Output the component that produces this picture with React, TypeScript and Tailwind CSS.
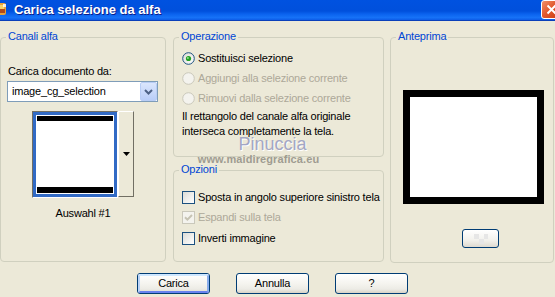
import React from "react";

const FONT = "font-['Liberation_Sans',Arial,sans-serif]";

function GroupBox({
  label,
  className,
  children,
}: {
  label: string;
  className: string;
  children?: React.ReactNode;
}) {
  return (
    <div className={"flex flex-col border border-[#d0d0bf] rounded-[4px] " + className}>
      <div className="-mt-[8px] ml-[5px] px-[2px] w-fit bg-[#ece9d8] text-[#0046d5] leading-[13px] tracking-[-0.2px]">
        {label}
      </div>
      {children}
    </div>
  );
}

function Radio({ checked, disabled }: { checked?: boolean; disabled?: boolean }) {
  return (
    <svg width="13" height="13" viewBox="0 0 13 13" className="shrink-0">
      <defs>
        <linearGradient id={disabled ? "rgd" : "rg"} x1="0" y1="0" x2="1" y2="1">
          <stop offset="0" stopColor={disabled ? "#f4f3ee" : "#dcdcd6"} />
          <stop offset="1" stopColor={disabled ? "#f4f3ee" : "#ffffff"} />
        </linearGradient>
      </defs>
      <circle
        cx="6.5"
        cy="6.5"
        r="5.8"
        fill={`url(#${disabled ? "rgd" : "rg"})`}
        stroke={disabled ? "#cac8bb" : "#1c5180"}
        strokeWidth="1"
      />
      {checked && <circle cx="6.5" cy="6.5" r="2.6" fill="#21a121" />}
      {checked && <circle cx="5.9" cy="5.9" r="1" fill="#8ee08e" />}
    </svg>
  );
}

function Check({ checked, disabled }: { checked?: boolean; disabled?: boolean }) {
  return (
    <div
      className={
        "w-[13px] h-[13px] shrink-0 border flex items-center justify-center " +
        (disabled
          ? "border-[#cac8bb] bg-[#f4f3ee]"
          : "border-[#1c5180] bg-[linear-gradient(135deg,#dcdcd7,#ffffff)]")
      }
    >
      {checked && (
        <svg width="9" height="9" viewBox="0 0 9 9">
          <path
            d="M1 4.2 L3.4 6.6 L8 2"
            fill="none"
            stroke={disabled ? "#c6c3b3" : "#21a121"}
            strokeWidth="2"
          />
        </svg>
      )}
    </div>
  );
}

function XPButton({
  label,
  def,
  className,
}: {
  label: string;
  def?: boolean;
  className: string;
}) {
  return (
    <div
      className={
        "rounded-[3px] border border-[#003c74] bg-[linear-gradient(to_bottom,#ffffff_0%,#f5f4ef_50%,#ecebe5_80%,#d8d3c6_100%)] flex " +
        className
      }
    >
      <div
        className={
          "flex-1 flex items-center justify-center rounded-[2px] tracking-[-0.2px] " +
          (def ? "border-[2px] border-t-[#cee7ff] border-l-[#bcd4f6] border-r-[#89adec] border-b-[#6982ee]" : "")
        }
      >
        {label}
      </div>
    </div>
  );
}

export default function App() {
  return (
    <div
      className={
        "w-[555px] h-[297px] bg-[#ece9d8] overflow-hidden flex flex-col text-[11px] leading-[13px] text-black " +
        FONT
      }
    >
      {/* Title bar */}
      <div className="h-[21px] shrink-0 flex items-start overflow-hidden border-b border-[#0a3fba] bg-[linear-gradient(to_bottom,#0052e0_0%,#0050dc_55%,#0a62ee_70%,#1672f7_88%,#0d5ce8_100%)]">
        <svg width="8" height="20" viewBox="0 0 8 20" className="shrink-0">
          <rect x="-4" y="3" width="10" height="12" rx="2" fill="#e8a23a" />
          <rect x="-2" y="5" width="6" height="4" fill="#f6d26a" />
          <rect x="0" y="9" width="5" height="4" fill="#b24a1a" />
          <rect x="3" y="4" width="3" height="3" fill="#ffffff" opacity="0.8" />
        </svg>
        <div className="ml-[6px] mt-[2px] text-white font-bold text-[13px] leading-[16px] [text-shadow:1px_1px_0_#0a1e8a]">
          Carica selezione da alfa
        </div>
        <div className="flex-1" />
        <div className="w-[21px] h-[19px] mr-[-7px] shrink-0 rounded-[3px] border border-white bg-[linear-gradient(135deg,#f0906a_0%,#e2582e_45%,#c83a12_100%)] flex items-center justify-start pl-[4px]">
          <svg width="11" height="11" viewBox="0 0 11 11">
            <path d="M1.5 1.5 L9.5 9.5 M9.5 1.5 L1.5 9.5" stroke="#ffffff" strokeWidth="2" />
          </svg>
        </div>
      </div>

      {/* Body */}
      <div className="flex pt-[16px] shrink-0">
        {/* Canali alfa */}
        <GroupBox label="Canali alfa" className="w-[166px] h-[225px]">
          <div className="mt-[22px] ml-[7px] tracking-[-0.2px]">Carica documento da:</div>
          <div className="mt-[3px] ml-[6px] w-[151px] h-[21px] border border-[#7f9db9] bg-white flex items-center">
            <div className="flex-1 pl-[4px] tracking-[-0.2px]">image_cg_selection</div>
            <div className="w-[17px] h-[19px] rounded-[2px] border border-[#b9cdf5] bg-[linear-gradient(to_bottom,#dbe6fd,#b9cdf8)] flex items-center justify-center">
              <svg width="9" height="6" viewBox="0 0 9 6">
                <path d="M1 1 L4.5 4.5 L8 1" fill="none" stroke="#4d6185" strokeWidth="2" />
              </svg>
            </div>
          </div>
          <div className="mt-[9px] ml-[31px] flex h-[87px]">
            <div className="w-[86px] h-[87px] border border-t-[#716f64] border-l-[#716f64] border-r-white border-b-white">
              <div className="w-full h-full border-[3px] border-[#316ac5] bg-white flex flex-col justify-between p-[1px]">
                <div className="h-[5px] bg-black" />
                <div className="h-[6px] bg-black" />
              </div>
            </div>
            <div className="w-[16px] h-[86px] border border-t-white border-l-white border-r-[#716f64] border-b-[#716f64] bg-[#ece9d8] flex items-center justify-center">
              <svg width="7" height="4" viewBox="0 0 7 4">
                <path d="M0 0 L7 0 L3.5 4 Z" fill="#000000" />
              </svg>
            </div>
          </div>
          <div className="mt-[9px] w-full text-center tracking-[-0.2px]">Auswahl #1</div>
        </GroupBox>

        {/* Middle column */}
        <div className="ml-[7px] w-[211px] flex flex-col relative">
          <GroupBox label="Operazione" className="w-[211px] h-[120px]">
            <div className="mt-[9px] ml-[8px] flex flex-col gap-[7px] tracking-[-0.2px]">
              <div className="flex items-center h-[13px] gap-[3px]">
                <Radio checked />
                <span>Sostituisci selezione</span>
              </div>
              <div className="flex items-center h-[13px] gap-[3px] text-[#aca899]">
                <Radio disabled />
                <span>Aggiungi alla selezione corrente</span>
              </div>
              <div className="flex items-center h-[13px] gap-[3px] text-[#aca899]">
                <Radio disabled />
                <span>Rimuovi dalla selezione corrente</span>
              </div>
            </div>
            <div className="mt-[4px] ml-[8px] leading-[15px] tracking-[-0.2px]">
              Il rettangolo del canale alfa originale
              <br />
              interseca completamente la tela.
            </div>
          </GroupBox>
          <GroupBox label="Opzioni" className="mt-[13px] w-[211px] h-[92px]">
            <div className="mt-[15px] ml-[8px] flex flex-col tracking-[-0.2px]">
              <div className="flex items-center h-[13px] gap-[3px]">
                <Check />
                <span>Sposta in angolo superiore sinistro tela</span>
              </div>
              <div className="mt-[7px] flex items-center h-[13px] gap-[3px] text-[#aca899]">
                <Check checked disabled />
                <span>Espandi sulla tela</span>
              </div>
              <div className="mt-[8px] flex items-center h-[13px] gap-[3px]">
                <Check />
                <span>Inverti immagine</span>
              </div>
            </div>
          </GroupBox>
          {/* watermark overlay */}
          <div className="absolute left-0 top-[100px] w-[211px] flex flex-col items-center pointer-events-none">
            <div className="ml-[-12px] text-[18px] leading-[14px] text-[#a3a7c4] [text-shadow:1px_1px_0_#ffffff]">
              Pinuccia
            </div>
            <div className="mt-[3px] ml-[-40px] text-[11px] leading-[10px] font-bold tracking-[0.1px] text-[#8c8a80] opacity-80">
              www.maidiregrafica.eu
            </div>
          </div>
        </div>

        {/* Anteprima */}
        <GroupBox label="Anteprima" className="ml-[6px] w-[164px] h-[226px]">
          <div className="mt-[47px] ml-[12px] w-[141px] h-[114px] border-[7px] border-black bg-white" />
          <div className="mt-[25px] ml-[71px] w-[37px] h-[19px] rounded-[3px] border border-[#003c74] bg-[linear-gradient(to_bottom,#ffffff,#f2f1ec_60%,#dedad0)] flex items-center justify-center">
            <svg width="14" height="10" viewBox="0 0 14 10">
              <rect x="0" y="0" width="5" height="5" fill="#e6e6e6" />
              <rect x="5" y="5" width="5" height="5" fill="#e6e6e6" />
              <rect x="10" y="0" width="4" height="5" fill="#e6e6e6" />
            </svg>
          </div>
        </GroupBox>
      </div>

      {/* Buttons */}
      <div className="flex pt-[10px] pl-[137px] gap-[26px]">
        <XPButton label="Carica" def className="w-[73px] h-[21px]" />
        <XPButton label="Annulla" className="w-[73px] h-[21px]" />
        <XPButton label="?" className="w-[73px] h-[21px]" />
      </div>
    </div>
  );
}
